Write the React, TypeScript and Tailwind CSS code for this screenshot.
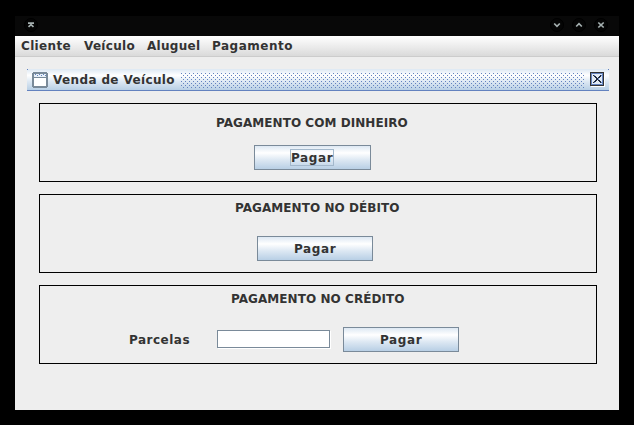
import type { ReactNode } from 'react';

function Label({ className = '', children }: { className?: string; children: ReactNode }) {
  return <span className={`block h-[14px] whitespace-nowrap leading-[14px] ${className}`}>{children}</span>;
}

function PayButton({ className = '', focused = false }: { className?: string; focused?: boolean }) {
  return (
    <button
      className={`flex h-[25px] shrink-0 items-center justify-center border border-[#7a8a99] bg-[linear-gradient(to_bottom,#dde8f3_0%,#ffffff_30%,#dde8f3_60%,#b8cfe5_100%)] ${className}`}
    >
      <span
        className={`flex h-[17px] w-[44px] items-center justify-start whitespace-nowrap border leading-[14px] tracking-[0.6px] ${
          focused ? 'mr-[1px] border-[#a3b8cc]' : 'border-transparent'
        }`}
      >
        Pagar
      </span>
    </button>
  );
}

function WindowButton({ d }: { d: string }) {
  return (
    <svg width="14" height="14" viewBox="0 0 14 14" fill="none">
      <circle cx="7" cy="7" r="6.5" fill="#050505" stroke="#000" />
      <path d={d} stroke="#a5b0b0" strokeWidth="1.7" />
    </svg>
  );
}

function FrameIcon() {
  return (
    <svg width="16" height="16" viewBox="0 0 16 16" shapeRendering="crispEdges">
      <path d="M1 0h14v1h1v14h-1v1H1v-1H0V1h1z" fill="#7a8a99" />
      <rect x="2" y="2" width="12" height="3" fill="#e8f0f8" />
      <path d="M3 2h1v1H3zM7 2h1v1H7zM11 2h1v1h-1zM5 3h1v1H5zM9 3h1v1H9zM13 3h1v1h-1z" fill="#6382bf" />
      <rect x="2" y="6" width="12" height="8" fill="#fff" />
    </svg>
  );
}

function CloseIcon() {
  return (
    <svg width="15" height="15" viewBox="0 0 15 15" shapeRendering="crispEdges">
      <rect x="1" y="1" width="14" height="14" fill="#fff" />
      <rect x="0" y="0" width="14" height="14" fill="#333" />
      <rect x="1" y="1" width="12" height="12" fill="#6382bf" />
      <rect x="2" y="2" width="11" height="10" fill="#e3ecf6" />
      <path d="M12 2h1v10h-1z" fill="#6382bf" />
      <path
        d="M3 3h2v1h1v1h1v1h1V5h1V4h1V3h2v1h-1v1h-1v1H9v2h1v1h1v1h1v1h-2v-1H9V9H8V8H7v1H6v1H5v1H3v-1h1V9h1V8h1V6H5V5H4V4H3z"
        fill="#20293d"
      />
      <path d="M4 3h1v1H4zM11 3h1v1h-1zM8 6h1v2H8zM4 10h1v1H4zM11 10h1v1h-1z" fill="#6382bf" />
    </svg>
  );
}

function Bumps() {
  return (
    <svg className="block h-[15px] w-[403px]" width="403" height="15" shapeRendering="crispEdges">
      <path
        d="M0 .5H403M0 4.5H403M0 8.5H403M0 12.5H403"
        stroke="#6382bf"
        strokeWidth="1"
        strokeDasharray="1 3"
      />
      <path
        d="M2 2.5H403M2 6.5H403M2 10.5H403M2 14.5H403"
        stroke="#6382bf"
        strokeWidth="1"
        strokeDasharray="1 3"
      />
    </svg>
  );
}

export default function App() {
  return (
    <div className="h-[425px] w-[634px] overflow-hidden bg-black pl-[15px] pt-[16px] font-['DejaVu_Sans',sans-serif] text-[12px] font-bold text-[#333]">
      <div className="flex h-[394px] w-[604px] flex-col bg-[#eee]">
        <header className="flex h-[20px] shrink-0 items-start bg-[#080808] pl-[9px] pr-[11px] pt-[2px]">
          <WindowButton d="M4 5.2H10M4.5 8.8L7 6.6L9.5 8.8" />
          <div className="ml-auto flex gap-[8px]">
            <WindowButton d="M4.2 5.5L7 8.3L9.8 5.5" />
            <WindowButton d="M4.2 8.5L7 5.7L9.8 8.5" />
            <WindowButton d="M4.3 4.5L9.7 9.5M9.7 4.5L4.3 9.5" />
          </div>
        </header>
        <nav className="flex h-[21px] shrink-0 gap-[12px] border-b border-[#ccc] bg-[linear-gradient(to_bottom,#fff,#dadada)] pl-[6px] pt-[3px]">
          <Label className="w-[51px] tracking-[0.35px]">Cliente</Label>
          <Label className="w-[51px] tracking-[0.3px]">Veículo</Label>
          <Label className="w-[53px] tracking-[0.3px]">Aluguel</Label>
          <Label className="tracking-[0.5px]">Pagamento</Label>
        </nav>
        <main className="flex flex-col px-[12px] pt-[12px]">
          <div className="relative flex h-[22px] w-[582px] border-b border-[#6382bf] bg-[linear-gradient(to_bottom,#dde8f3_0%,#ffffff_30%,#dde8f3_60%,#b8cfe5_100%)] pl-[5px] pt-[3px]">
            <i className="absolute left-0 top-0 size-px bg-[#6382bf]" />
            <i className="absolute right-0 top-0 size-px bg-[#6382bf]" />
            <FrameIcon />
            <Label className="ml-[5px] mt-[1px] w-[128px] tracking-[0.37px]">Venda de Veículo</Label>
            <div className="pt-[1px]">
              <Bumps />
            </div>
            <div className="ml-[6px]">
              <CloseIcon />
            </div>
          </div>
          <div className="flex flex-col gap-[12px] pl-[12px] pt-[12px]">
            <section className="flex h-[79px] w-[558px] flex-col border border-black pt-[12px]">
              <Label className="ml-[176px] tracking-[0.05px]">PAGAMENTO COM DINHEIRO</Label>
              <PayButton focused className="ml-[214px] mt-[15px] w-[117px]" />
            </section>
            <section className="flex h-[79px] w-[558px] flex-col border border-black pt-[6px]">
              <Label className="ml-[195px] tracking-[0.06px]">PAGAMENTO NO DÉBITO</Label>
              <PayButton className="ml-[217px] mt-[21px] w-[116px]" />
            </section>
            <section className="flex h-[79px] w-[558px] flex-col border border-black pt-[6px]">
              <Label className="ml-[191px] tracking-[0.06px]">PAGAMENTO NO CRÉDITO</Label>
              <div className="mt-[21px] flex items-start pl-[89px]">
                <Label className="mt-[6px] w-[88px] tracking-[0.5px]">Parcelas</Label>
                <input className="mt-[3px] block h-[18px] w-[113px] border border-[#7a8a99] bg-white shadow-[1px_1px_0_#fff] outline-none" />
                <PayButton className="ml-[13px] w-[116px]" />
              </div>
            </section>
          </div>
        </main>
      </div>
    </div>
  );
}
